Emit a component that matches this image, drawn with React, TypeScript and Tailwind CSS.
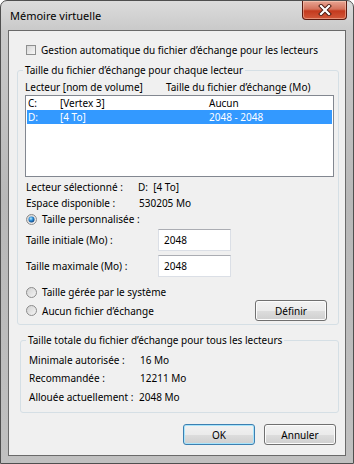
import React from "react";

const Radio = ({ checked }: { checked?: boolean }) => (
  <svg width="11" height="11" viewBox="0 0 11 11" className="shrink-0">
    <defs>
      <linearGradient id="rbg" x1="0" y1="0" x2="1" y2="1">
        <stop offset="0" stopColor="#d0d0d0" />
        <stop offset="1" stopColor="#f6f6f6" />
      </linearGradient>
      <radialGradient id="rdot" cx="0.4" cy="0.35" r="0.7">
        <stop offset="0" stopColor="#b8ecff" />
        <stop offset="0.45" stopColor="#2f8fd8" />
        <stop offset="1" stopColor="#0b3c78" />
      </radialGradient>
    </defs>
    <circle cx="5.5" cy="5.5" r="5" fill="url(#rbg)" stroke="#8c8c8c" />
    {checked && <circle cx="5.5" cy="5.5" r="3" fill="url(#rdot)" />}
  </svg>
);

const Btn = ({ label, primary }: { label: string; primary?: boolean }) => (
  <button
    className={
      primary
        ? "h-[21px] w-[72px] rounded-[3px] border border-[#3c7fb1] bg-[linear-gradient(#f2f2f2_0%,#ebebeb_50%,#dddddd_51%,#cfcfcf_100%)] shadow-[inset_0_0_0_1px_#a8e4fb] text-[10px] leading-none text-black"
        : "h-[21px] w-[72px] rounded-[3px] border border-[#707070] bg-[linear-gradient(#f2f2f2_0%,#ebebeb_50%,#dddddd_51%,#cfcfcf_100%)] shadow-[inset_0_0_0_1px_#fcfcfc] text-[10px] leading-none text-black"
    }
  >
    {label}
  </button>
);

const CloseButton = () => (
  <div className="flex h-[19px] w-[45px] items-center justify-center rounded-b-[4px] border border-t-0 border-[#5b1a10] bg-[linear-gradient(#e8a593_0%,#d4725c_45%,#c43a1e_55%,#d2583a_100%)] shadow-[inset_0_0_0_1px_rgba(255,220,200,0.45)]">
    <svg width="14" height="12" viewBox="0 0 14 12">
      <path d="M3 2 L11 10 M11 2 L3 10" stroke="#4a1a10" strokeWidth="4" strokeLinecap="square" />
      <path d="M3 2 L11 10 M11 2 L3 10" stroke="#ffffff" strokeWidth="2.2" strokeLinecap="square" />
    </svg>
  </div>
);

const App = () => {
  return (
    <div className="flex h-[464px] w-[354px] flex-col whitespace-nowrap rounded-t-[7px] border border-[#4f4f4f] bg-[linear-gradient(180deg,#dcdcdc_0px,#c9c9c9_30px,#b8b8b8_200px,#c0c0c0_100%)] font-['Noto_Sans',sans-serif] text-[10px] text-black">
      {/* Title bar */}
      <div className="flex h-[29px] items-start">
        <div className="pl-[9px] pt-[7px] text-[11px] leading-[16px] text-black">Mémoire virtuelle</div>
        <div className="ml-auto mr-[6px]">
          <CloseButton />
        </div>
      </div>

      {/* Client area */}
      <div className="mx-[7px] mb-[7px] flex flex-1 flex-col border border-[#6a6a6a] bg-[#f0f0f0]">
        <div className="mt-[12px] flex h-[14px] items-center pl-[17px]">
          <div className="h-[10px] w-[10px] border border-[#8e8f8f] bg-[linear-gradient(135deg,#d6d6d6,#f8f8f8)]" />
          <span className="ml-[5px] leading-[14px]">Gestion automatique du fichier d’échange pour les lecteurs</span>
        </div>

        <fieldset className="ml-[8px] mr-[6px] mt-[6px] rounded-[3px] border border-[#d5dfe5] pb-[3px]">
          <legend className="ml-[5px] px-[2px] leading-[14px]">Taille du fichier d’échange pour chaque lecteur</legend>
          <div className="flex flex-col">
            <div className="mt-[3px] flex h-[14px] items-center pl-[7px] leading-[14px]">
              <span className="w-[141px]">Lecteur [nom de volume]</span>
              <span>Taille du fichier d’échange (Mo)</span>
            </div>
            <div className="ml-[7px] mt-[1px] h-[82px] w-[309px] border border-[#828790] bg-white">
              <div className="flex h-[14px] items-center leading-[14px]">
                <span className="w-[34px] pl-[2px]">C:</span>
                <span className="w-[149px]">[Vertex 3]</span>
                <span>Aucun</span>
              </div>
              <div className="mx-[1px] flex h-[14px] items-center bg-[#3399ff] leading-[14px] text-white">
                <span className="w-[33px] pl-[1px]">D:</span>
                <span className="w-[149px]">[4 To]</span>
                <span>2048 - 2048</span>
              </div>
            </div>

            <div className="mt-[3px] flex h-[14px] items-center pl-[8px] leading-[14px]">
              <span className="w-[112px]">Lecteur sélectionné :</span>
              <span>D:&nbsp;&nbsp;[4 To]</span>
            </div>
            <div className="mt-[2px] flex h-[14px] items-center pl-[8px] leading-[14px]">
              <span className="w-[113px]">Espace disponible :</span>
              <span>530205 Mo</span>
            </div>
            <div className="mt-[2px] flex h-[14px] items-center gap-[5px] pl-[8px] leading-[14px]">
              <Radio checked />
              <span>Taille personnalisée :</span>
            </div>
            <div className="mt-[3px] flex h-[22px] items-center pl-[8px]">
              <span className="w-[132px]">Taille initiale (Mo) :</span>
              <div className="flex h-[22px] w-[73px] items-center border border-[#dbdfe6] border-t-[#abadb3] bg-white pl-[5px]">2048</div>
            </div>
            <div className="mt-[4px] flex h-[22px] items-center pl-[8px]">
              <span className="w-[132px]">Taille maximale (Mo) :</span>
              <div className="flex h-[22px] w-[73px] items-center border border-[#dbdfe6] border-t-[#abadb3] bg-white pl-[5px]">2048</div>
            </div>
            <div className="mt-[8px] flex h-[14px] items-center gap-[5px] pl-[8px] leading-[14px]">
              <Radio />
              <span>Taille gérée par le système</span>
            </div>
            <div className="mt-[1px] flex h-[21px] items-center gap-[5px] pl-[8px] pr-[11px] leading-[14px]">
              <Radio />
              <span>Aucun fichier d’échange</span>
              <div className="ml-auto">
                <Btn label="Définir" />
              </div>
            </div>
          </div>
        </fieldset>

        <fieldset className="ml-[11px] mr-[6px] mt-[8px] rounded-[3px] border border-[#d5dfe5] pb-[8px]">
          <legend className="ml-[5px] px-[2px] leading-[14px]">Taille totale du fichier d’échange pour tous les lecteurs</legend>
          <div className="flex flex-col pl-[8px] leading-[14px]">
            <div className="mt-[6px] flex h-[14px] items-center">
              <span className="w-[111px]">Minimale autorisée :</span>
              <span>16 Mo</span>
            </div>
            <div className="mt-[4px] flex h-[14px] items-center">
              <span className="w-[111px]">Recommandée :</span>
              <span>12211 Mo</span>
            </div>
            <div className="mt-[5px] flex h-[14px] items-center">
              <span className="w-[110px]">Allouée actuellement :</span>
              <span>2048 Mo</span>
            </div>
          </div>
        </fieldset>

        <div className="mt-[11px] flex justify-end gap-[9px] pr-[9px]">
          <Btn label="OK" primary />
          <Btn label="Annuler" />
        </div>
      </div>
    </div>
  );
};

export default App;
